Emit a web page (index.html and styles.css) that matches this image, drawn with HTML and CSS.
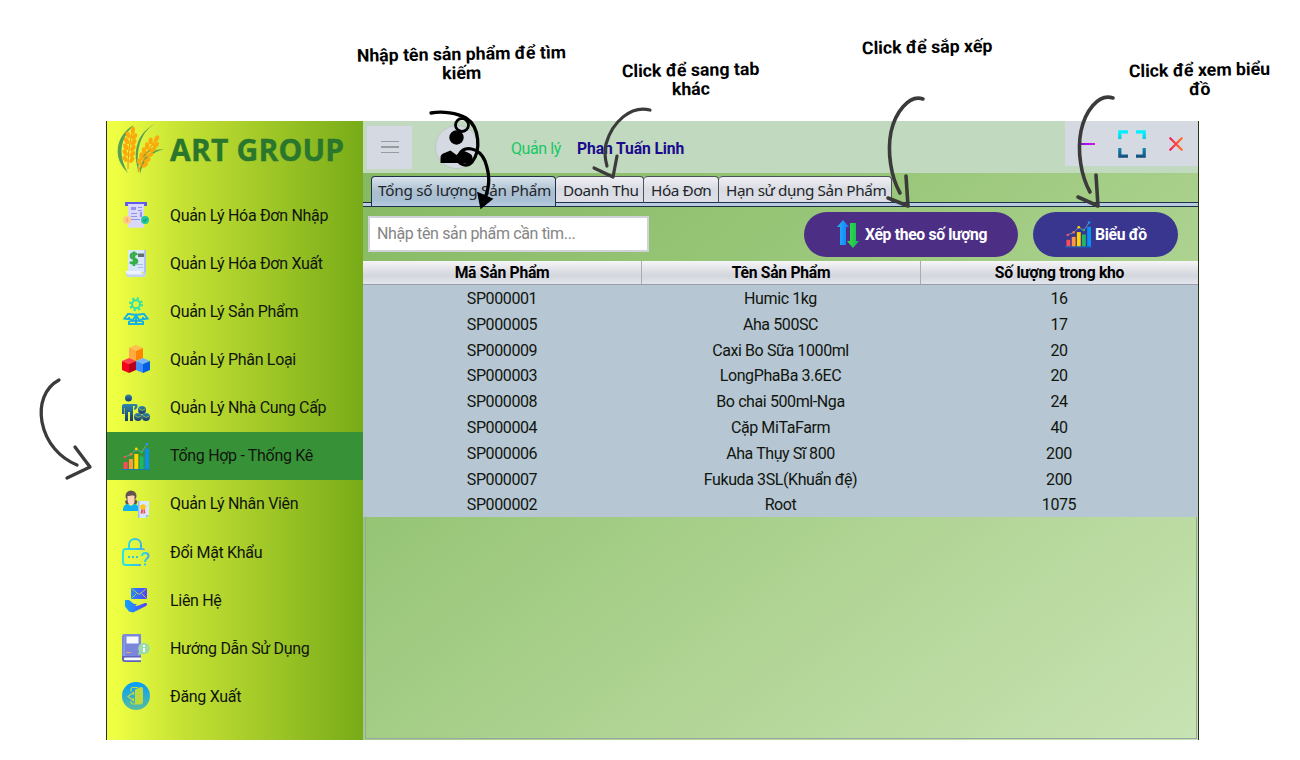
FILE: index.html
```html
<!DOCTYPE html>
<html lang="vi">
<head>
<meta charset="utf-8">
<title>ART GROUP</title>
<link rel="stylesheet" href="styles.css">
</head>
<body>
<svg class="defs" width="0" height="0">
  <defs>
    <linearGradient id="teal" x1="0" y1="0" x2="0" y2="1"><stop offset="0" stop-color="#31e8a0"/><stop offset="1" stop-color="#0d9fff"/></linearGradient>
    <linearGradient id="navy" x1="0" y1="0" x2="0" y2="1"><stop offset="0" stop-color="#2f86a8"/><stop offset="1" stop-color="#1b3a68"/></linearGradient>
    <linearGradient id="lock" x1="0" y1="0" x2="1" y2="0"><stop offset="0" stop-color="#22e8e4"/><stop offset="1" stop-color="#43a9f0"/></linearGradient>
    <linearGradient id="hand" x1="0" y1="0" x2="1" y2="0"><stop offset="0" stop-color="#0da6ff"/><stop offset="1" stop-color="#5a3fff"/></linearGradient>
    <linearGradient id="exit" x1="0" y1="0" x2="0" y2="1"><stop offset="0" stop-color="#009dff"/><stop offset="1" stop-color="#5cbd9c"/></linearGradient>
    <linearGradient id="full" gradientUnits="userSpaceOnUse" x1="0" y1="0" x2="0" y2="28"><stop offset="0.1" stop-color="#00f0ff"/><stop offset="1" stop-color="#17497c"/></linearGradient>
    <linearGradient id="close" gradientUnits="userSpaceOnUse" x1="0" y1="0" x2="14" y2="0"><stop offset="0" stop-color="#f5146e"/><stop offset="1" stop-color="#ff7a18"/></linearGradient>
    <linearGradient id="min" x1="0" y1="0" x2="1" y2="0"><stop offset="0" stop-color="#7a0de8"/><stop offset="1" stop-color="#d518e8"/></linearGradient>
    <linearGradient id="up" x1="0" y1="0" x2="1" y2="0"><stop offset="0" stop-color="#20b8f5"/><stop offset="1" stop-color="#1976ff"/></linearGradient>
    <linearGradient id="down" x1="0" y1="0" x2="1" y2="0"><stop offset="0" stop-color="#3ce03c"/><stop offset="1" stop-color="#0fb860"/></linearGradient>
    <symbol id="chart" viewBox="0 0 28 28">
      <path fill="#ff4b58" d="M1.500 20h4v7h-4z"/><path fill="#ff9a3c" d="M7 17h4v10H7z"/><path fill="#ffd500" d="M12.300 12h4v15h-4z"/><path fill="#1fb864" d="M17.600 14.500h4V27h-4z"/><path fill="#0a8ff5" d="M23 6.500h4V27h-4z"/>
      <path fill="none" stroke="#7aa6c0" stroke-width=".8" d="M2.500 15 9 12.500 14.300 7l5.200 3.300L25 2"/>
      <circle cx="2.800" cy="15" r="1.300" fill="#ff4b58"/><circle cx="9" cy="12.300" r="1.300" fill="#ff7a35"/><circle cx="14.300" cy="7" r="1.400" fill="#ffd500"/><circle cx="19.500" cy="10" r="1.200" fill="#1fc864"/><circle cx="25" cy="2" r="1.300" fill="#1597ff"/>
      <path fill="#0a78d0" d="M0 27h28v.8H0z"/>
    </symbol>
    <g id="ear">
      <path d="M0 0C-1-10-1-25 1-36" fill="none" stroke="#f79a09" stroke-width="1.200"/>
      <g fill="#fba90d">
        <ellipse cx="1.500" cy="-39" rx="2.200" ry="3.600"/>
        <ellipse cx="-2.800" cy="-34" rx="2.200" ry="3.600" transform="rotate(-28 -2.800 -34)"/><ellipse cx="3.600" cy="-33" rx="2.200" ry="3.600" transform="rotate(30 3.600 -33)"/>
        <ellipse cx="-3.800" cy="-28" rx="2.200" ry="3.700" transform="rotate(-30 -3.800 -28)"/><ellipse cx="3.200" cy="-27" rx="2.200" ry="3.700" transform="rotate(30 3.200 -27)"/>
        <ellipse cx="-4.200" cy="-22" rx="2.200" ry="3.700" transform="rotate(-32 -4.200 -22)"/><ellipse cx="3" cy="-21" rx="2.200" ry="3.700" transform="rotate(30 3 -21)"/>
        <ellipse cx="-4.200" cy="-16" rx="2.200" ry="3.700" transform="rotate(-34 -4.200 -16)"/><ellipse cx="3" cy="-15" rx="2.200" ry="3.700" transform="rotate(30 3 -15)"/>
        <ellipse cx="-3.800" cy="-10" rx="2" ry="3.500" transform="rotate(-36 -3.800 -10)"/><ellipse cx="3" cy="-9.500" rx="2" ry="3.500" transform="rotate(30 3 -9.500)"/>
      </g>
    </g>
  </defs>
</svg>

<div class="window">
  <aside class="sidebar">
    <div class="brand">
      <svg class="brand-logo" viewBox="0 0 48 52">
        <g fill="#58a052"><path d="M17 2C3 9-4 27 4 41c2 4 5 7 7 9C2 35 1 17 17 2z"/><path d="M38 1C25 8 18 25 22 48c-7-17-3-38 16-47z"/><path d="M47 26C35 29 26 38 23 51c-1-14 10-25 24-25z"/><path d="M42 23C30 28 22 38 20 48c1-13 9-22 22-25z"/></g>
        <use href="#ear" transform="translate(11 46) rotate(5)"/>
        <use href="#ear" transform="translate(21 49) rotate(27) scale(.98)"/>
      </svg>
      <span class="brand-name">ART GROUP</span>
    </div>
    <nav class="menu">
      <a class="item"><svg class="icon" viewBox="0 0 28 28"><path fill="#615bea" d="M3 1h22v4H3z"/><path fill="#d9d8f8" d="M6 3h16v23l-2 1.500-2-1.500-2 1.500-2-1.500-2 1.500-2-1.500-2 1.500-2-1.500z"/><path fill="#9291ee" d="M9 6h5v3H9zM16 6h4v1h-4zM16 9h4v1h-4zM9 12h6v1H9zM9 15h6v1H9zM18 11h2v5h-2zM9 18h9v1H9z"/><circle cx="5" cy="19" r="4" fill="#ffca87"/><path stroke="#f8974b" d="M5 17v4"/><circle cx="23" cy="19" r="4" fill="#24c69d"/><path fill="none" stroke="#087b68" d="m21.300 19 1.200 1.300 2.300-2.600"/></svg><span>Quản Lý Hóa Đơn Nhập</span></a>
      <a class="item"><svg class="icon" viewBox="0 0 28 28"><path fill="#d9e7fb" d="M6 1h18v22H6z"/><path fill="#aebff0" d="M22 1h2v23h-2z"/><path fill="#c4d2f7" d="M3.500 22H19c0 3 5 3 5 0v3c0 2-1 3-3 3H7c-2 0-3.500-2-3.500-6z"/><path fill="#edf4ff" d="M3.500 22H19c0 2 1 3 2 3.500H7c-2 0-3-1.500-3.500-3.500z"/><path fill="none" stroke="#35ad49" stroke-width="2.600" d="M15 6c-1-2-6-2-6 1 0 4 6 2 6 5s-5 3-7 1M12 2.500V17"/><path fill="#65716f" d="M16 4.500h6V8h-6z"/><path fill="#a9baf2" d="M14 15h7v1h-7zM16 18h5v1h-5z"/></svg><span>Quản Lý Hóa Đơn Xuất</span></a>
      <a class="item"><svg class="icon" viewBox="0 0 28 28"><g fill="none" stroke="#2fe2a5"><circle cx="14" cy="7.300" r="4" stroke-width="2"/><circle cx="14" cy="7.300" r="5.900" stroke-width="2.200" stroke-dasharray="2.200 2.434"/></g><path fill="none" stroke="#14b3e0" stroke-width="2" d="M7 20v7h14v-7M14 18v9M14 18 7 17H6l-3.500 4.500L11 23l3-5 3 5 8.500-1.500L22 17h-1l-7 1"/><path stroke="#0d9ff2" stroke-width="1.500" d="M8 24h12"/></svg><span>Quản Lý Sản Phẩm</span></a>
      <a class="item"><svg class="icon" viewBox="0 0 28 28"><path fill="#ffb03a" d="M14 0 7 3v10l7 3z"/><path fill="#ffc251" d="m14 0 7 3-7 3-7-3z"/><path fill="#ffab43" d="m7 3 7 3v10l-7-3z"/><path fill="#ff8500" d="m21 3-7 3v10l7-3z"/><path fill="#ff4051" d="m7 13 7 3-7 3-7-3z"/><path fill="#f5001d" d="m0 16 7 3v9l-7-3z"/><path fill="#b80018" d="m14 16-7 3v9l7-3z"/><path fill="#78b4ff" d="m21 13 7 3-7 3-7-3z"/><path fill="#3f8dff" d="m14 16 7 3v9l-7-3z"/><path fill="#005fe0" d="m28 16-7 3v9l7-3z"/></svg><span>Quản Lý Phân Loại</span></a>
      <a class="item"><svg class="icon" viewBox="0 0 28 28"><g fill="url(#navy)"><circle cx="6.500" cy="4" r="3.500"/><path d="M2 10h11c3 0 3 2 2 4l-2 2-1-1 1-3h-2v15H8v-9H6v9H3V14h-.5v6H0v-8c0-1 1-2 2-2z"/><circle cx="20" cy="16" r="4"/><circle cx="16" cy="23" r="4"/><circle cx="24" cy="23" r="4"/></g><path fill="none" stroke="#a9cb34" stroke-width=".8" d="M17 15h1l2 1.500 3-1.500M13 22h1l2 1.500 3-1.500M21 22h1l2 1.500 3-1.500"/></svg><span>Quản Lý Nhà Cung Cấp</span></a>
      <a class="item active"><svg class="icon"><use href="#chart"/></svg><span>Tổng Hợp - Thống Kê</span></a>
      <a class="item"><svg class="icon" viewBox="0 0 28 28"><circle cx="9" cy="6" r="5.500" fill="#65534f"/><circle cx="5.500" cy="12" r="2.300" fill="#65534f"/><circle cx="13" cy="12" r="2.300" fill="#65534f"/><path fill="#ffd5b8" d="M5.500 6c3 0 5-1 7 0v5c0 3-2 4-3.500 4S5.500 13 5.500 10z"/><path fill="#11aef0" d="M1 21c0-5 2-7 5-7l3 2 3-2c3 0 5 2 5 7z"/><path fill="#d8e8ff" d="M16 11h11v14l-3 3h-8z"/><path fill="#96bdf3" d="M16 11h1.500v17H16zM24 25h3l-3 3z"/><path fill="#ef5362" d="M19.500 18h2l-1 6-2-1zM21.500 18h1l1 5-2 1z"/><circle cx="21" cy="17" r="2.800" fill="#ffc31c"/></svg><span>Quản Lý Nhân Viên</span></a>
      <a class="item"><svg class="icon" viewBox="0 0 28 28"><g fill="none" stroke="url(#lock)" stroke-width="2"><path d="M7 11V7c0-8 12-8 12 0v4M22 12c0-1-1-1-2-1H4c-2 0-3 1-3 3v10c0 2 1 3 3 3h15"/><path d="M20 18c0-4 6.500-4 6.500 0 0 3-3.500 2-3.500 6"/></g><path fill="#36c4ef" d="M6 18h2v2H6zM10 18h2v2h-2zM14 18h2v2h-2zM22 25.500h2v2h-2z"/></svg><span>Đổi Mật Khẩu</span></a>
      <a class="item"><svg class="icon" viewBox="0 0 28 28"><path fill="url(#hand)" d="M9 2h16v11H9zM3 14h4l5 4h3l-2 2h2l8-3c2-.5 3 1 1 3l-8 4-5 2.500-4-1-4-5z"/><path fill="none" stroke="#b6d632" stroke-width=".9" d="m9.500 2.500 7.500 6 7.500-6M9.500 12.500l5-5M24.500 12.500l-5-5"/></svg><span>Liên Hệ</span></a>
      <a class="item"><svg class="icon" viewBox="0 0 28 28"><path fill="#7986d9" d="M2 0h17v22H0V3c0-2 1-3 2-3z"/><path fill="#5e63b9" d="M0 22h19v6H3c-2 0-3-1-3-3z"/><path fill="#f6f7ff" d="M4.500 2.500h12v7h-12zM3 23.500h16v2.700H3c-1.500 0-1.500-2.700 0-2.700z"/><path fill="#8d98e8" d="M2 1h1v21H1z"/><path fill="#e8a970" d="M4 18h5v1H4z"/><circle cx="22" cy="14.500" r="5.800" fill="#9bdca8"/><path fill="#9bdca8" d="m17 17-1 4 5-1z"/><path fill="#fff" d="M21 11h2v2h-2zM21 14h2v4h-2z"/></svg><span>Hướng Dẫn Sử Dụng</span></a>
      <a class="item"><svg class="icon" viewBox="0 0 28 28"><circle cx="14" cy="14" r="14" fill="url(#exit)"/><path fill="#bedb3b" d="m13 7.500 6-2.500c1 0 2 .5 2 2v13c0 1-1 2-2 2h-6z"/><path fill="none" stroke="#bedb3b" stroke-width="1.200" d="M9 9.500V7.500C9 6 10 5.500 11 5.500h5M9 19v1.500c0 1 1 1.500 2 1.500h8M11.500 13V10.500L6 14.500l5.500 4V16"/></svg><span>Đăng Xuất</span></a>
    </nav>
  </aside>

  <main class="main">
    <header class="topbar">
      <div class="burger"><i></i><i></i><i></i></div>
      <svg class="avatar" viewBox="0 0 44 44"><circle cx="22" cy="22" r="21.500" fill="#d5d9e1" stroke="#b5c2bd" stroke-width=".7"/><circle cx="21.500" cy="12.500" r="7.200"/><path d="M5.500 38v-5c0-5 5-5 10-7.500l6 4.500 6-4.500c6 2.500 10 3 10 7.500v5z"/></svg>
      <span class="role">Quản lý</span>
      <span class="user">Phan Tuấn Linh</span>
      <div class="controls">
        <svg class="minimize" viewBox="0 0 16 2"><rect width="16" height="2" fill="url(#min)"/></svg>
        <svg class="maximize" viewBox="0 0 28 28"><path fill="none" stroke="url(#full)" stroke-width="3.200" d="M1.800 9V1.800H10M18 1.800h8.200V9M1.800 18v8.200H10M18 26.200h8.200V18"/></svg>
        <svg class="close" viewBox="0 0 14 14"><path fill="none" stroke="url(#close)" stroke-width="2.200" d="m.6.600 12.800 12.800M13.400.6.600 13.400"/></svg>
      </div>
    </header>
    <div class="tabs">
      <div class="tab selected">Tổng số lượng Sản Phẩm</div>
      <div class="tab t2">Doanh Thu</div>
      <div class="tab t3">Hóa Đơn</div>
      <div class="tab t4">Hạn sử dụng Sản Phẩm</div>
    </div>
    <div class="toolbar">
      <div class="search">Nhập tên sản phẩm cần tìm...</div>
      <div class="button sort"><svg class="sort-icon" viewBox="0 0 22 28"><path fill="url(#up)" d="M6 0 0 7h3v18h6V7h3z"/><path fill="url(#down)" d="M13 3h6v18h3l-6 7-6-7h3z"/></svg><span>Xếp theo số lượng</span></div>
      <div class="button graph"><svg class="chart-icon"><use href="#chart"/></svg><span>Biểu đồ</span></div>
    </div>
    <div class="table">
      <div class="row head"><span>Mã Sản Phẩm</span><span>Tên Sản Phẩm</span><span>Số lượng trong kho</span></div>
      <div class="row"><span>SP000001</span><span>Humic 1kg</span><span>16</span></div>
      <div class="row"><span>SP000005</span><span>Aha 500SC</span><span>17</span></div>
      <div class="row"><span>SP000009</span><span>Caxi Bo Sữa 1000ml</span><span>20</span></div>
      <div class="row"><span>SP000003</span><span>LongPhaBa 3.6EC</span><span>20</span></div>
      <div class="row"><span>SP000008</span><span>Bo chai 500ml-Nga</span><span>24</span></div>
      <div class="row"><span>SP000004</span><span>Cặp MiTaFarm</span><span>40</span></div>
      <div class="row"><span>SP000006</span><span>Aha Thụy Sĩ 800</span><span>200</span></div>
      <div class="row"><span>SP000007</span><span>Fukuda 3SL(Khuẩn đệ)</span><span>200</span></div>
      <div class="row"><span>SP000002</span><span>Root</span><span>1075</span></div>
    </div>
    <div class="empty"></div>
  </main>
</div>

<div class="note note-search">Nhập tên sản phẩm để tìm<br>kiếm</div>
<div class="note note-tab">Click để sang tab<br>khác</div>
<div class="note note-sort">Click để sắp xếp</div>
<div class="note note-graph">Click để xem biểu<br>đồ</div>

<svg class="arrows" viewBox="0 0 1300 760">
  <g fill="none" stroke="#000" stroke-width="3.300" stroke-linecap="round">
    <path d="M431 113c12-2 26 0 35 5 14 9 15 33 6 44-6 6-17 2-13-7 5-10 20-8 26 6 5 14 5 24 0 37"/>
    <ellipse cx="462" cy="125" rx="6.500" ry="6.500" stroke-width="2.800"/>
    <path d="m478 193 14 6-11 9z" fill="#000" stroke-width="1.500"/>
  </g>
  <g fill="none" stroke="#3b3b3b" stroke-linecap="round" stroke-linejoin="round">
    <path stroke-width="3.200" d="M650 110c-19-5-38 12-44 34-2 8-1 15 1 22M594 168l19 9 4-21"/>
    <path stroke-width="3.600" d="M923 99c-14-5-28 14-32 33-4 20 0 45 9 61M888 198l20 8-2-30"/>
    <path stroke-width="3.600" d="M1113 98c-15-5-28 14-32 33-4 20 0 45 9 61M1078 197l20 9-2-31"/>
    <path stroke-width="3.300" d="M59 380c-15 8-20 25-17 42 4 21 18 36 35 43M75 447l15 20-23 11"/>
  </g>
</svg>
</body>
</html>
```
FILE: styles.css
```css
* { box-sizing: border-box; }

body {
  margin: 0;
  width: 1300px;
  height: 760px;
  overflow: hidden;
  position: relative;
  padding: 121px 101px 20px 106px;
  background: #fff;
  color: #10150e;
  font: 16px/19px Roboto, sans-serif;
}

.defs { position: absolute; }

.window {
  display: flex;
  height: 619px;
  border-left: 1px solid #273014;
  border-right: 1px solid #273014;
}

.sidebar {
  width: 256px;
  flex: none;
  background: linear-gradient(90deg, #efff43 0, #efff43 3%, #c7e334 28%, #a5cb29 58%, #78ab18 100%);
}

.brand {
  display: flex;
  align-items: center;
  gap: 5px;
  height: 70px;
  padding: 0 0 14px 10px;
}
.brand-logo { width: 48px; height: 52px; }
.brand-name {
  padding-top: 2px;
  font: bold 30px/40px "Open Sans", sans-serif;
  letter-spacing: 0.2px;
  color: #2a762c;
  -webkit-text-stroke: 0.4px #2a762c;
  white-space: nowrap;
}

.item {
  display: flex;
  align-items: center;
  gap: 20px;
  height: 48.15px;
  padding-left: 15px;
  letter-spacing: -0.31px;
  white-space: nowrap;
}
.item.active { background: #379237; }
.icon { width: 28px; height: 28px; flex: none; }

.main {
  flex: 1;
  display: flex;
  flex-direction: column;
  min-width: 0;
  background: linear-gradient(143deg, #84b760 0, #98c678 35%, #b0d494 65%, #c8e3b3 100%);
}

.topbar {
  display: flex;
  align-items: center;
  height: 52px;
  flex: none;
  background: #c1d9bf;
}
.burger {
  display: flex;
  flex-direction: column;
  align-items: center;
  justify-content: center;
  gap: 4px;
  width: 45px;
  height: 43px;
  margin-left: 4px;
  background: #d5d9e1;
}
.burger i { width: 18px; height: 1.5px; background: #9a9b9e; }
.avatar { width: 44px; height: 44px; margin-left: 23px; }
.role { width: 66px; margin-left: 32px; padding-top: 3px; color: #18c865; letter-spacing: -0.4px; }
.user { padding-top: 3px; font-weight: bold; font-size: 15.7px; letter-spacing: -0.12px; color: #1a0b8e; }
.controls {
  display: flex;
  align-items: center;
  align-self: flex-start;
  width: 133px;
  height: 45px;
  margin-left: auto;
  padding-left: 14px;
  background: #d5d9e1;
}
.minimize { width: 16px; height: 2px; }
.maximize { width: 28px; height: 28px; margin-left: 23px; }
.close { width: 14px; height: 14px; margin-left: 23px; }

.tabs {
  display: flex;
  align-items: flex-start;
  height: 34px;
  flex: none;
  padding: 3px 0 0 8px;
  background: linear-gradient(#20304a, #20304a) 0 29px / 100% 1px no-repeat,
    linear-gradient(#b7cce0, #b7cce0) 0 30px / 100% 3px no-repeat,
    linear-gradient(#20304a, #20304a) 0 33px / 100% 1px no-repeat;
}
.tab {
  height: 27px;
  padding-left: 7px;
  border: 1px solid #4b535c;
  border-bottom-color: #20304a;
  border-left-width: 0;
  border-radius: 4px 4px 0 0;
  background: linear-gradient(#f0f0f4, #d9dbe3 50%, #dfe0e7);
  font: 15.3px/27px "Noto Sans", sans-serif;
  letter-spacing: -0.42px;
  color: #222529;
  white-space: nowrap;
}
.tab.selected {
  width: 185px;
  height: 30px;
  padding-left: 6px;
  border-left-width: 1px;
  border-color: #20304a;
  border-bottom: 0;
  background: linear-gradient(#d8e3ed, #abbfd0 50%, #a9bfd4 80%, #b7cce0);
  letter-spacing: -0.25px;
}
.t2 { width: 88px; }
.t3 { width: 75px; }
.t4 { width: 173px; }

.toolbar {
  display: flex;
  align-items: center;
  height: 54px;
  flex: none;
  padding: 0 20px 0 5px;
}
.search {
  width: 281px;
  height: 36px;
  padding-left: 7px;
  border: 2px solid #d0d2da;
  background: #fff;
  color: #858585;
  font-size: 16px;
  line-height: 31px;
  letter-spacing: -0.36px;
}
.button {
  display: flex;
  align-items: center;
  height: 45px;
  border-radius: 23px;
  color: #fff;
  font-weight: bold;
  font-size: 15.7px;
  letter-spacing: -0.32px;
  white-space: nowrap;
}
.sort { width: 214px; margin-left: auto; padding-left: 33px; gap: 6px; background: #4c2f85; }
.graph { width: 145px; margin-left: 15px; padding-left: 32px; gap: 3px; background: #39368f; }
.sort-icon { width: 22px; height: 28px; }
.chart-icon { width: 27px; height: 28px; }

.table { flex: none; }
.row {
  display: grid;
  grid-template-columns: 278px 279px 278px;
  height: 25.8px;
  line-height: 27px;
  letter-spacing: -0.4px;
  background: #b6c6d3;
  text-align: center;
}
.head {
  height: 24px;
  border-bottom: 1px solid #9b9faa;
  background: linear-gradient(#f6f6f8, #dddee4 45%, #d4d6de 65%, #e4e6ed);
  color: #000;
  font-weight: bold;
  font-size: 15.7px;
  line-height: 23px;
  letter-spacing: -0.27px;
}
.head span + span { border-left: 1px solid #a9abb3; }
.empty {
  flex: 1;
  margin: 0 1px 1px 2px;
  border: 1px solid #98a5a6;
  border-top: 0;
}

/* Handwritten hints lie over the window and its margins. */
.note {
  position: absolute;
  color: #000;
  font-weight: bold;
  font-size: 17.7px;
  line-height: 19px;
  text-align: center;
  white-space: nowrap;
  transform: rotate(-1deg);
}
.note-search { left: 357px; top: 45px; }
.note-tab { left: 622px; top: 61px; }
.note-sort { left: 862px; top: 38px; }
.note-graph { left: 1129px; top: 61px; }

.arrows {
  position: absolute;
  left: 0;
  top: 0;
  width: 1300px;
  height: 760px;
  pointer-events: none;
}
```
